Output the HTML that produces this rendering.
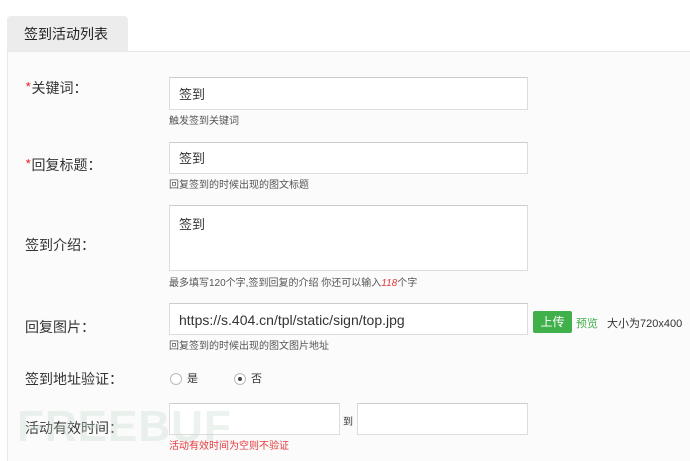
<!DOCTYPE html>
<html><head><meta charset="utf-8"><style>
*{margin:0;padding:0;box-sizing:border-box}
body{width:690px;height:453px;background:#fff;font-family:"Liberation Sans","Noto Sans CJK SC",sans-serif;position:relative;overflow:hidden;color:#333}
.tab{position:absolute;left:7px;top:16px;width:121px;height:36px;background:#ececec;border-radius:4px 4px 0 0;font-size:14px;line-height:36px;padding-left:17px;color:#222}
.panel{position:absolute;left:7px;top:51px;width:690px;height:410px;background:#fbfbfb;border-top:1px solid #e8e8e8;border-left:1px solid #e8e8e8}
.a{position:absolute}
.lab{font-size:14px;color:#333;left:25px;font-family:"Noto Sans CJK SC",sans-serif}
.lab b{color:#e4393c;font-weight:normal}
.in{background:#fff;border:1px solid #ddd;border-top-color:#ccc;font-size:13px;padding-left:9px;color:#333}
.h{font-size:10px;color:#555;left:169px}
.rad{width:12px;height:12px;border:1px solid #bbb;border-radius:50%;background:#fff}
</style></head><body>
<div class="tab">签到活动列表</div>
<div class="panel"></div>
<div class="a lab" style="top:78px"><b>*</b>关键词：</div>
<div class="a in" style="left:169px;top:77px;width:359px;height:33px;line-height:33px">签到</div>
<div class="a h" style="top:112px">触发签到关键词</div>
<div class="a lab" style="top:155px"><b>*</b>回复标题：</div>
<div class="a in" style="left:169px;top:142px;width:359px;height:32px;line-height:32px">签到</div>
<div class="a h" style="top:176px">回复签到的时候出现的图文标题</div>
<div class="a lab" style="top:235px">签到介绍：</div>
<div class="a in" style="left:169px;top:205px;width:359px;height:66px;padding-top:8px">签到</div>
<div class="a h" style="top:274px">最多填写120个字,签到回复的介绍 你还可以输入<i style="color:#e4393c">118</i>个字</div>
<div class="a lab" style="top:317px">回复图片：</div>
<div class="a in" style="left:169px;top:303px;width:359px;height:32px;line-height:32px;font-size:14px">https://s.404.cn/tpl/static/sign/top.jpg</div>
<div class="a" style="left:533px;top:311px;width:39px;height:22px;background:#3fb04a;color:#fff;font-size:12px;line-height:22px;text-align:center;border-radius:2px">上传</div>
<div class="a" style="left:576px;top:315px;font-size:11px;color:#3fb04a">预览</div>
<div class="a" style="left:607px;top:315px;font-size:11px;color:#333">大小为720x400</div>
<div class="a h" style="top:337px">回复签到的时候出现的图文图片地址</div>
<div class="a lab" style="top:369px">签到地址验证：</div>
<div class="a rad" style="left:170px;top:373px"></div>
<div class="a" style="left:187px;top:370px;font-size:11px">是</div>
<div class="a rad" style="left:234px;top:373px"><div style="width:4px;height:4px;background:#444;border-radius:50%;margin:3px"></div></div>
<div class="a" style="left:251px;top:370px;font-size:11px">否</div>
<div class="a lab" style="top:418px">活动有效时间：</div>
<div class="a in" style="left:169px;top:403px;width:171px;height:32px"></div>
<div class="a" style="left:343px;top:413px;font-size:10px">到</div>
<div class="a in" style="left:357px;top:403px;width:171px;height:32px"></div>
<div class="a h" style="top:437px;color:#e4393c">活动有效时间为空则不验证</div>
<div class="a" style="left:17px;top:402px;font-size:44px;font-weight:bold;color:rgba(200,220,210,.35);letter-spacing:1px">FREEBUF</div>
</body></html>
